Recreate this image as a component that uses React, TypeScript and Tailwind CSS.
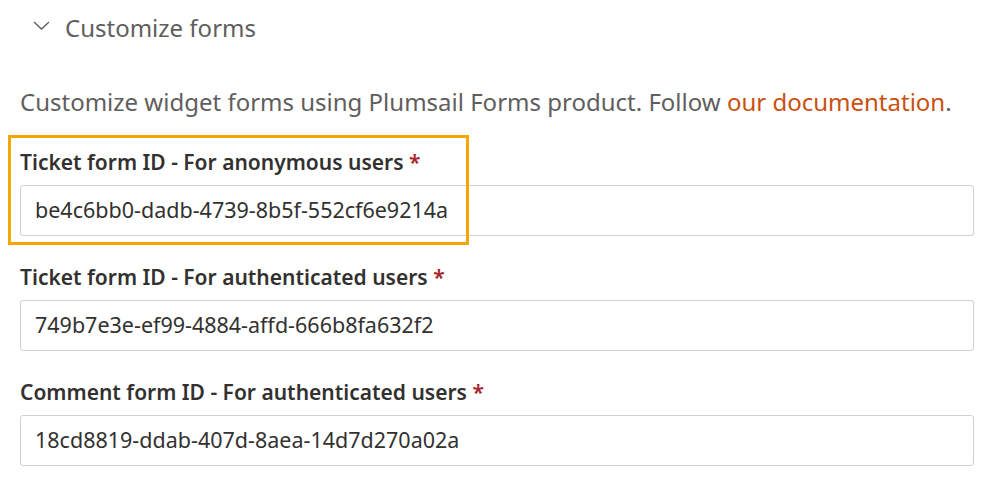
const fields = [
  { label: 'Ticket form ID - For anonymous users', value: 'be4c6bb0-dadb-4739-8b5f-552cf6e9214a', highlight: true },
  { label: 'Ticket form ID - For authenticated users', value: '749b7e3e-ef99-4884-affd-666b8fa632f2' },
  { label: 'Comment form ID - For authenticated users', value: '18cd8819-ddab-407d-8aea-14d7d270a02a' },
];

function Chevron() {
  return (
    <svg width="17" height="9" viewBox="0 0 17 9" fill="none" className="shrink-0 mb-[6px]">
      <path d="M1 1l7.5 7 7.5-7" stroke="#605e5c" strokeWidth="1.3" />
    </svg>
  );
}

export default function App() {
  return (
    <div className="w-[997px] h-[482px] bg-white overflow-hidden font-['Noto_Sans',sans-serif]">
      {/* Header */}
      <div className="flex items-center h-[56px] pl-[33px] gap-[15px]">
        <Chevron />
        <span className="text-[24px] leading-[32px] text-[#605e5c]">Customize forms</span>
      </div>

      <div className="pl-[20px] pr-[23px]">
        <p className="mt-[30px] text-[24px] text-[#605e5c] leading-[32px] whitespace-nowrap">
          Customize widget forms using Plumsail Forms product. Follow{' '}
          <a className="text-[#ca5010]">our documentation</a>.
        </p>

        <div className="flex flex-col gap-[27px] mt-[30px]">
          {fields.map((f, i) => (
            <div key={i} className="relative flex flex-col gap-[9px]">
              {f.highlight && (
                <div className="absolute left-[-12px] top-[-13px] w-[461px] h-[110px] border-[3px] border-[#f7a600] pointer-events-none" />
              )}
              <label className="text-[21px] font-semibold text-[#323130] leading-[28px] whitespace-nowrap">
                {f.label} <span className="text-[#a4262c]">*</span>
              </label>
              <div className="h-[51px] border border-[#d2d0ce] rounded-[3px] flex items-center px-[14px] text-[21.5px] text-[#323130]">
                {f.value}
              </div>
            </div>
          ))}
        </div>
      </div>
    </div>
  );
}
